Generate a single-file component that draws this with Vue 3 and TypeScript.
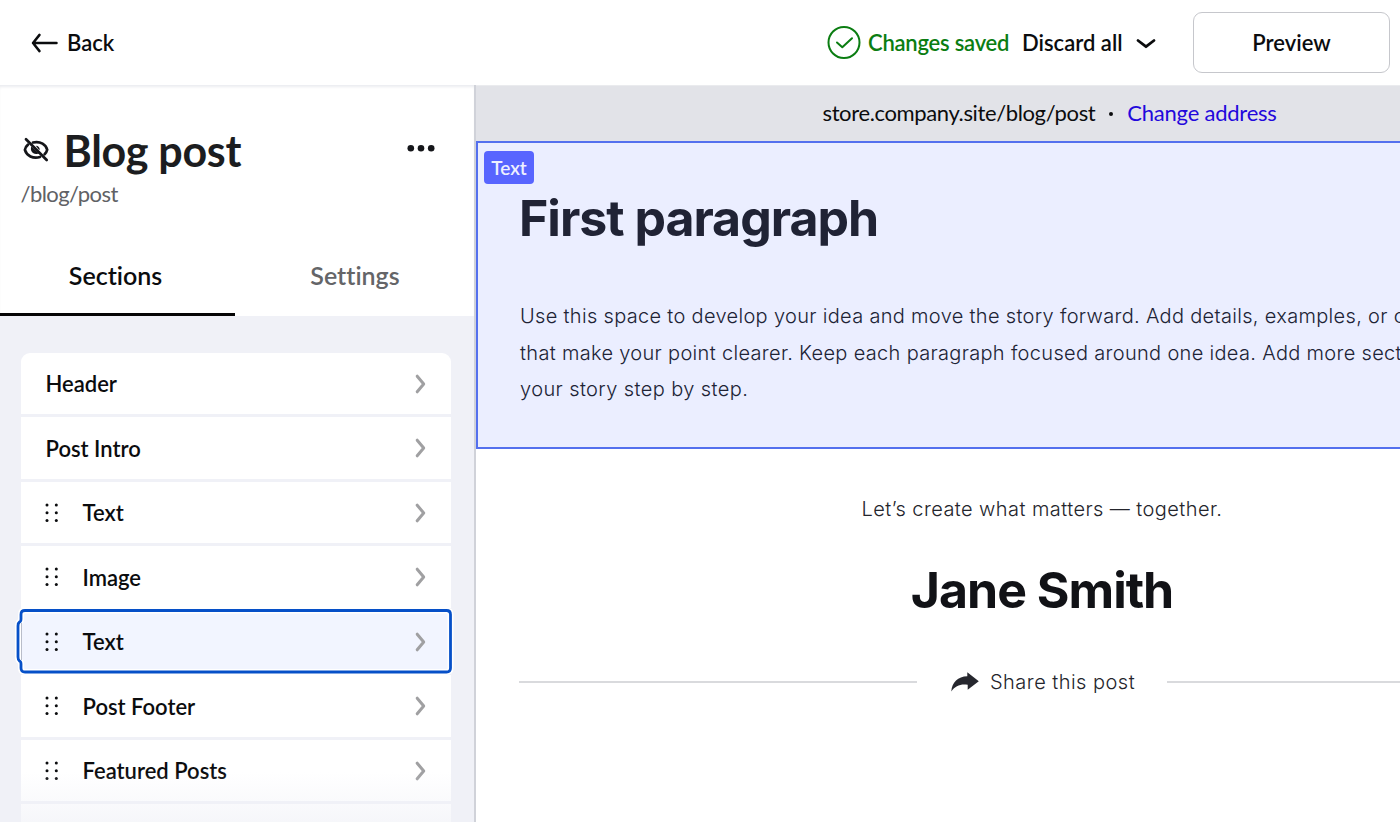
<script setup lang="ts">
interface Section {
  label: string
  draggable: boolean
  selected?: boolean
}

const sections: Section[] = [
  { label: 'Header', draggable: false },
  { label: 'Post Intro', draggable: false },
  { label: 'Text', draggable: true },
  { label: 'Image', draggable: true },
  { label: 'Text', draggable: true, selected: true },
  { label: 'Post Footer', draggable: true },
  { label: 'Featured Posts', draggable: true },
]
const dots: [number, number][] = [
  [2, 2], [11.3, 2], [2, 9.7], [11.3, 9.7], [2, 17.4], [11.3, 17.4],
]
</script>

<template>
  <div class="editor">
    <header class="topbar">
      <button class="back">
        <svg width="28" height="20" viewBox="0 0 28 20" fill="none" stroke="#0b0c0e" stroke-width="2.5" stroke-linecap="round" stroke-linejoin="round">
          <path d="M25.500 10H2M8.500 1.900 2 10l6.500 8.100" />
        </svg>
        <span class="back-label">Back</span>
      </button>
      <div class="status">
        <svg width="34" height="34" viewBox="0 0 34 34" fill="none" stroke="#0b7d12" stroke-width="2" stroke-linecap="round" stroke-linejoin="round">
          <circle cx="17" cy="16.500" r="15.500" />
          <path d="m10 16.500 5.300 4.700 9.700-9" />
        </svg>
        <span class="saved">Changes saved</span>
      </div>
      <button class="discard">
        <span class="discard-label">Discard all</span>
        <svg class="caret" width="20" height="12" viewBox="0 0 20 12" fill="none" stroke="#0b0c0e" stroke-width="2.800" stroke-linecap="round" stroke-linejoin="round">
          <path d="m2 2.500 8 6.200 8-6.200" />
        </svg>
      </button>
      <button class="preview"><span>Preview</span></button>
    </header>

    <div class="body">
      <aside class="sidebar">
        <div class="page-head">
          <div class="title-row">
            <svg class="hidden-icon" width="26" height="26" viewBox="0 0 26 26" fill="none" stroke="#15161a" stroke-width="2.700" stroke-linecap="round">
              <path d="M10 5.500C17.500 3.600 23.200 8 24.200 12.800C23.800 14.600 22.900 16 21.600 17.300" />
              <path d="M5 7.600C3.300 9 2.200 10.900 1.900 12.900C3.600 18.700 10 22.200 17 20" />
              <path d="M8.300 9.500C6.900 13.500 9.500 18 14.800 16.800L16.500 17z" fill="#15161a" stroke="none" />
              <path d="M12.800 8.700C15.300 8.800 16.800 10.500 16.800 12.900L15.600 12.400z" fill="#15161a" stroke="none" />
              <path d="M3 2.300 23.700 23" />
            </svg>
            <h1>Blog post</h1>
            <svg class="more" width="28" height="8" viewBox="0 0 28 8" fill="#15161a">
              <circle cx="3.800" cy="4.300" r="3.300" /><circle cx="14" cy="4.300" r="3.300" /><circle cx="24.200" cy="4.300" r="3.300" />
            </svg>
          </div>
          <div class="slug"><span>/blog/post</span></div>
        </div>
        <nav class="tabs">
          <div class="tab active"><span class="tab-sections">Sections</span></div>
          <div class="tab"><span class="tab-settings">Settings</span></div>
        </nav>
        <div class="list-area">
          <div class="list">
            <div v-for="(s, i) in sections" :key="i" class="row" :class="{ selected: s.selected }">
              <svg v-if="s.selected" class="outline" width="440" height="69" viewBox="0 0 440 69" fill="none">
                <path class="halo" d="M10 3.500H431.500Q435.500 3.500 435.500 7.500V61Q435.500 65 431.500 65H10Q6 65 6 61V57Q6 54.500 4.500 54Q3 53 3 50V19Q3 16 4.500 15Q6 14.500 6 12V7.500Q6 3.500 10 3.500Z" />
                <path class="ring" d="M10 3.500H431.500Q435.500 3.500 435.500 7.500V61Q435.500 65 431.500 65H10Q6 65 6 61V57Q6 54.500 4.500 54Q3 53 3 50V19Q3 16 4.500 15Q6 14.500 6 12V7.500Q6 3.500 10 3.500Z" />
                <path d="M6.500 16V53" stroke="#b9bdc9" />
              </svg>
              <svg v-if="s.draggable" class="grip" width="14" height="20" viewBox="0 0 14 20">
                <circle v-for="(d, n) in dots" :key="n" :cx="d[0]" :cy="d[1]" r="1.5" />
              </svg>
              <span class="row-label">{{ s.label }}</span>
              <svg class="chevron" width="12" height="20" viewBox="0 0 12 20" fill="none" stroke="#a0a0a2" stroke-width="3" stroke-linecap="round" stroke-linejoin="round">
                <path d="m2.200 2.200 6.500 7.800-6.500 7.800" />
              </svg>
            </div>
            <div class="row next"></div>
          </div>
          <div class="fade"></div>
        </div>
      </aside>

      <main class="canvas">
        <div class="address">
          <span class="url">store.company.site/blog/post</span>
          <i class="sep"></i>
          <a class="change">Change address</a>
        </div>
        <section class="text-block">
          <span class="badge">Text</span>
          <h2>First paragraph</h2>
          <div class="copy">
            <p class="l1">Use this space to develop your idea and move the story forward. Add details, examples, or c</p>
            <p class="l2">that make your point clearer. Keep each paragraph focused around one idea. Add more sect</p>
            <p class="l3">your story step by step.</p>
          </div>
        </section>
        <section class="outro">
          <p class="motto"><span>Let’s create what matters — together.</span></p>
          <h2 class="author"><span>Jane Smith</span></h2>
          <div class="share">
            <i class="rule"></i>
            <div class="share-btn">
              <svg width="28" height="20" viewBox="0 0 28 20" fill="#26272e">
                <path d="M16.300.3 27.800 9.200 16.700 17.700V12.800C9.200 11.800 4.500 13.800.3 19.500.9 10.300 7 4.500 16.300 4.300Z" />
              </svg>
              <span class="share-label">Share this post</span>
            </div>
            <i class="rule"></i>
          </div>
        </section>
      </main>
    </div>
  </div>
</template>

<style>
body { margin: 0; overflow: hidden; }
</style>

<style scoped>
* { box-sizing: border-box; margin: 0; }
.editor { width: 1400px; height: 822px; overflow: hidden; display: flex; flex-direction: column; background: #fff; color: #0b0c0e; font-family: Lato, "Liberation Sans", sans-serif; font-variant-ligatures: none; }
svg { display: block; flex: none; }
span { white-space: nowrap; }
button { background: none; border: 0; padding: 0; font: inherit; color: inherit; display: flex; align-items: center; }
.topbar { height: 85px; flex: none; display: flex; align-items: center; padding: 0 10px 0 31px; font-size: 22px; font-weight: 600; position: relative; z-index: 2; }
.back { gap: 8px; }
.status { margin-left: auto; display: flex; align-items: center; gap: 7px; color: #0b7d12; width: 195px; }
.saved { letter-spacing: -.22px; }
.discard { width: 171px; gap: 13px; }
.caret { margin-top: 2px; }
.preview { width: 197px; height: 61px; border: 1.500px solid #c6c7cc; border-radius: 9px; justify-content: center; }
.body { flex: 1; min-height: 0; display: flex; }
.sidebar { width: 476px; flex: none; display: flex; flex-direction: column; border-right: 2px solid #d0d2d9; box-shadow: inset 0 3px 3px -1px #ebecf0; }
.page-head { height: 151px; padding: 38px 42px 0 23px; }
.title-row { display: flex; align-items: center; height: 56px; }
.hidden-icon { margin-top: -3px; }
h1 { font-size: 43px; line-height: 56px; font-weight: 700; margin: 0 0 0 14.500px; letter-spacing: -.3px; color: #1c1d20; white-space: nowrap; }
.more { margin-left: auto; margin-top: -6px; margin-right: -3px; }
.slug { font-size: 22px; line-height: 28px; letter-spacing: -.55px; color: #606165; margin: 1px 0 0 -2.500px; }
.tabs { height: 80px; display: flex; flex: none; }
.tab { width: 235px; display: flex; justify-content: center; font-size: 25px; line-height: 78px; font-weight: 600; color: #646568; padding-left: 5px; }
.tab.active { color: #0b0c0e; border-bottom: 3px solid #050505; padding-left: 0; padding-right: 4px; }
.list-area { flex: 1; min-height: 0; overflow: hidden; background: #f0f1f7; padding: 36.500px 23px 0 21px; position: relative; }
.list { display: flex; flex-direction: column; gap: 3px; border-radius: 9px 9px 0 0; }
.row { height: 61.500px; flex: none; background: #fff; display: flex; align-items: center; padding: 1px 24px 0 24.500px; font-size: 22px; font-weight: 600; position: relative; }
.row:first-child { border-radius: 9px 9px 0 0; }
.row.selected { background: #f2f5ff; z-index: 1; }
.outline { position: absolute; left: -6px; top: -4px; }
.halo { stroke: #fff; stroke-width: 6; }
.ring { stroke: #0650c8; stroke-width: 2.800; }
.grip { margin-left: -1px; margin-right: 24px; fill: #0b0c0e; }
.chevron { margin-left: auto; }
.fade { position: absolute; left: 0; right: 0; bottom: 0; height: 50px; background: linear-gradient(rgba(240, 241, 247, 0), rgba(240, 241, 247, .6)); z-index: 2; }
.canvas { flex: 1; min-width: 0; display: flex; flex-direction: column; overflow: hidden; }
.address { height: 56px; flex: none; background: #e2e3e8; display: flex; align-items: center; padding: 0 0 2px 346.500px; font-size: 22px; border-top: 1px solid #eaebee; }
.url { letter-spacing: -.37px; }
.sep { width: 4px; height: 4px; border-radius: 50%; background: #0b0c0e; margin: 3px 14px 0; }
.change { color: #2208dc; white-space: nowrap; letter-spacing: -.23px; }
.text-block { height: 308px; flex: none; border: 2px solid #5470ee; border-right: 0; background: #ebeeff; padding: 8px 0 0 42px; overflow: hidden; color: #202335; }
.badge { display: block; width: 50px; height: 33px; margin-left: -36px; border-radius: 4px; background: #5865ff; color: #eef0ff; font-size: 19px; font-weight: 600; line-height: 33px; text-align: center; }
h2 { font-family: Inter, "Liberation Sans", sans-serif; font-size: 50px; font-weight: 650; line-height: 60px; letter-spacing: -1px; white-space: nowrap; padding-top: 4px; margin-left: -1px; }
.copy { padding-top: 50px; font-family: Inter, "Liberation Sans", sans-serif; font-size: 20px; font-weight: 320; line-height: 36.600px; white-space: nowrap; letter-spacing: .32px; }
.l3 { letter-spacing: .4px; }
.outro { font-family: Inter, "Liberation Sans", sans-serif; color: #24252c; padding-left: 43px; }
.motto { margin-top: 45px; text-align: center; font-size: 20px; font-weight: 320; line-height: 30px; width: 1046px; letter-spacing: .43px; }
.author { text-align: center; width: 1048px; margin-top: 32px; color: #111216; }
.share { width: 1046px; display: flex; align-items: center; height: 40px; margin-top: 42px; }
.rule { flex: 1; height: 1.500px; background: #d9dadd; }
.share-btn { display: flex; align-items: center; gap: 11px; width: 250px; padding-left: 34px; font-size: 20px; font-weight: 320; letter-spacing: .47px; }
</style>
